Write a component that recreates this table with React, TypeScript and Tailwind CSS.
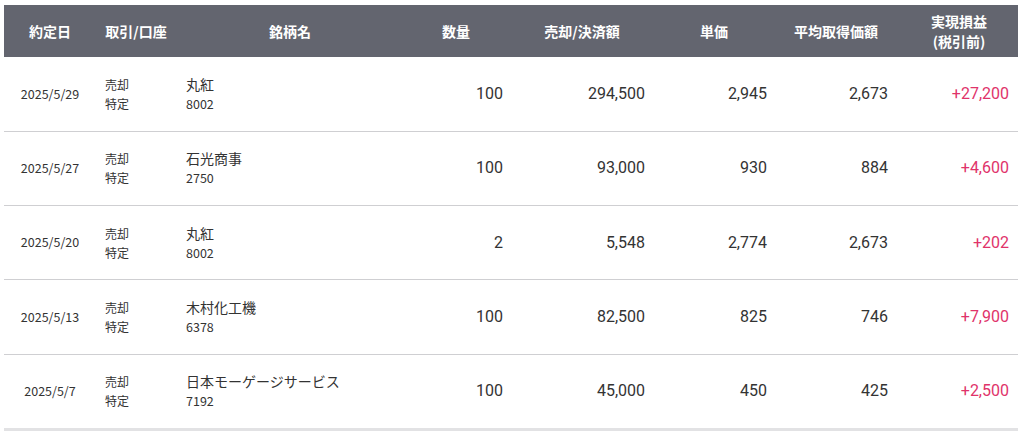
const rows = [
  { date: "2025/5/29", name: "丸紅", code: "8002", qty: "100", amount: "294,500", price: "2,945", avg: "2,673", pl: "+27,200" },
  { date: "2025/5/27", name: "石光商事", code: "2750", qty: "100", amount: "93,000", price: "930", avg: "884", pl: "+4,600" },
  { date: "2025/5/20", name: "丸紅", code: "8002", qty: "2", amount: "5,548", price: "2,774", avg: "2,673", pl: "+202" },
  { date: "2025/5/13", name: "木村化工機", code: "6378", qty: "100", amount: "82,500", price: "825", avg: "746", pl: "+7,900" },
  { date: "2025/5/7", name: "日本モーゲージサービス", code: "7192", qty: "100", amount: "45,000", price: "450", avg: "425", pl: "+2,500" },
];

const jp = "font-['Noto_Sans_CJK_JP',sans-serif]";
const num = "font-['Roboto','Noto_Sans_CJK_JP',sans-serif]";

export default function App() {
  return (
    <div className={`w-[1024px] h-[433px] bg-white pt-[5px] pl-[4px] ${jp}`}>
      <table className="w-[1014px] table-fixed border-collapse">
        <colgroup>
          <col className="w-[92px]" />
          <col className="w-[80px]" />
          <col className="w-[228px]" />
          <col className="w-[104px]" />
          <col className="w-[148px]" />
          <col className="w-[116px]" />
          <col className="w-[128px]" />
          <col className="w-[118px]" />
        </colgroup>
        <thead>
          <tr className="h-[52px] bg-[#63656f] text-white text-[14px] font-bold leading-[20px]">
            <th className="text-center">約定日</th>
            <th className="text-center">取引/口座</th>
            <th className="text-center">銘柄名</th>
            <th className="text-center">数量</th>
            <th className="text-center">売却/決済額</th>
            <th className="text-center">単価</th>
            <th className="text-center">平均取得価額</th>
            <th className="text-center">
              実現損益
              <br />
              (税引前)
            </th>
          </tr>
        </thead>
        <tbody className="text-[#333]">
          {rows.map((r, i) => (
            <tr
              key={i}
              className={`${i === rows.length - 1 ? "h-[75px] border-b-[3px] border-[#e2e2e4]" : "h-[74.25px] border-b border-[#cfcfd2]"}`}
            >
              <td className="text-center text-[12.5px]">{r.date}</td>
              <td className="pl-[9px] text-[12px] leading-[19px]">
                <div>売却</div>
                <div>特定</div>
              </td>
              <td className="pl-[10px]">
                <div className="text-[14px] leading-[20px]">{r.name}</div>
                <div className="text-[12.5px] leading-[20px]">{r.code}</div>
              </td>
              <td className={`text-right pr-[5px] text-[16px] ${num}`}>{r.qty}</td>
              <td className={`text-right pr-[11px] text-[16px] ${num}`}>{r.amount}</td>
              <td className={`text-right pr-[5px] text-[16px] ${num}`}>{r.price}</td>
              <td className={`text-right pr-[12px] text-[16px] ${num}`}>{r.avg}</td>
              <td className={`text-right pr-[9px] text-[16px] text-[#e0336a] ${num}`}>{r.pl}</td>
            </tr>
          ))}
        </tbody>
      </table>
    </div>
  );
}
